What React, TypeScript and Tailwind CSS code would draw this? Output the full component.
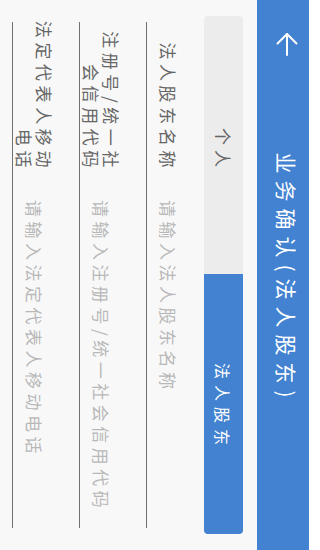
const FONT = "font-['Noto_Sans_CJK_SC','Noto_Sans',sans-serif]";

type Field = {
  label: string[];
  placeholder: string;
  first?: boolean;
};

const FIELDS: Field[] = [
  { label: ['法人股东名称'], placeholder: '请输入法人股东名称', first: true },
  { label: ['注册号/统一社', '会信用代码'], placeholder: '请输入注册号/统一社会信用代码' },
  { label: ['法定代表人移动', '电话'], placeholder: '请输入法定代表人移动电话' },
];

function BackArrow() {
  return (
    <svg width="24" height="22" viewBox="0 0 24 22" fill="none" stroke="white" strokeWidth={2} strokeLinecap="round" strokeLinejoin="round">
      <path d="M2 11H23" />
      <path d="M11.5 1.5L2 11l9.5 9.5" />
    </svg>
  );
}

function FormRow({ label, placeholder, first }: Field) {
  return (
    <div
      className={`flex h-[43px] items-center border-b border-[#707070] ${first ? 'mt-[15px]' : 'mt-[24px]'}`}
    >
      {/* 라벨: 오른쪽 정렬 */}
      <div className="flex w-[150px] shrink-0 flex-col items-end text-[17px] leading-[20px] tracking-[4.6px] text-[#666666]">
        {label.map((line) => (
          <span key={line} className="whitespace-nowrap">
            {line}
          </span>
        ))}
      </div>
      <input
        className="ml-[28px] min-w-0 flex-1 bg-transparent text-[17px] tracking-[4.5px] text-[#444] outline-none placeholder:text-[#b8b8b8]"
        placeholder={placeholder}
      />
    </div>
  );
}

export default function App() {
  return (
    <div className="h-[550px] w-[309px] overflow-hidden bg-[#f8f8f8]">
      {/* 가로 화면을 세로로 회전 */}
      <div className={`h-[309px] w-[550px] origin-top-left [transform:translateX(309px)_rotate(90deg)] bg-[#f8f8f8] ${FONT}`}>
        {/* 헤더 */}
        <header className="grid h-[52px] grid-cols-[1fr_auto_1fr] items-center bg-[#4282d1]">
          <div className="mb-[9px] pl-[32px]">
            <BackArrow />
          </div>
          <h1 className="mb-[6px] pl-[7px] text-[21px] font-normal tracking-[7px] text-white">
            业务确认(法人股东)
          </h1>
          <div />
        </header>

        {/* 탭 */}
        <div className="mx-[16px] mt-[14px] flex h-[39px] overflow-hidden rounded-[4px]">
          <button className="flex w-[258px] items-center justify-center bg-[#ececec] pl-[10px] text-[17px] tracking-[5px] text-[#666666]">
            个人
          </button>
          <button className="flex flex-1 items-center justify-center bg-[#4282d1] pl-[6px] text-[16px] tracking-[6px] text-white">
            法人股东
          </button>
        </div>

        {/* 입력 폼 */}
        <div className="mx-[22px]">
          {FIELDS.map((f) => (
            <FormRow key={f.placeholder} {...f} />
          ))}
        </div>
      </div>
    </div>
  );
}
